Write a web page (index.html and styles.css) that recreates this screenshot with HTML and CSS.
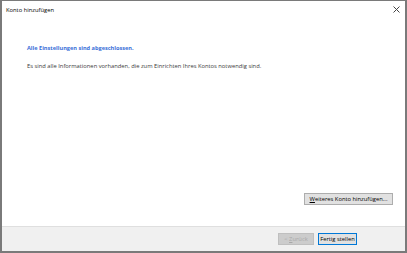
FILE: index.html
```html
<!DOCTYPE html>
<html>
<head>
    <title>Konto hinzufügen</title>
    <link rel="stylesheet" href="styles.css">
</head>
<body>
    <div class="window">
        <div class="titlebar">
            <span class="title">Konto hinzufügen</span>
            <span class="close">
                <svg width="7" height="7" viewBox="0 0 7 7"><path d="M0.5 0.5 L6.5 6.5 M6.5 0.5 L0.5 6.5" stroke="#444" stroke-width="1" fill="none"/></svg>
            </span>
        </div>
        <div class="content">
            <h1 class="heading">Alle Einstellungen sind abgeschlossen.</h1>
            <p class="info">Es sind alle Informationen vorhanden, die zum Einrichten Ihres Kontos notwendig sind.</p>
            <div class="spacer"></div>
            <div class="extra">
                <button class="btn wide"><u>W</u>eiteres Konto hinzufügen...</button>
            </div>
        </div>
        <div class="footer">
            <button class="btn disabled">&lt; <u>Z</u>urück</button>
            <button class="btn primary">Fertig stellen</button>
        </div>
    </div>
</body>
</html>
```

FILE: styles.css
```css
html, body {
    margin: 0;
    padding: 0;
    height: 100%;
}
body {
    font-family: "Open Sans", "Noto Sans", sans-serif;
    font-size: 5.8px;
    color: #222;
    background: #fff;
}
.window {
    box-sizing: border-box;
    width: 407px;
    height: 253px;
    border: 1px solid #7a7a7a;
    border-left-width: 2px;
    border-right-width: 2px;
    border-bottom-width: 2px;
    display: flex;
    flex-direction: column;
    background: #fff;
}
.titlebar {
    height: 17px;
    display: flex;
    align-items: center;
    justify-content: space-between;
    padding: 0 5px 0 4px;
}
.title {
    color: #000;
}
.close {
    display: flex;
}
.content {
    flex: 1;
    display: flex;
    flex-direction: column;
    padding: 26px 12px 0 25px;
}
.heading {
    margin: 0;
    font-size: 5.6px;
    font-weight: bold;
    color: #3a6fd8;
}
.info {
    margin: 10px 0 0 0;
    color: #3a3a3a;
}
.spacer {
    flex: 1;
}
.extra {
    display: flex;
    justify-content: flex-end;
    margin-bottom: 21px;
}
.btn {
    font-family: inherit;
    font-size: 5.8px;
    color: #000;
    background: #e1e1e1;
    border: 1px solid #adadad;
    padding: 0;
    height: 12px;
    margin: 0;
    white-space: nowrap;
    line-height: 10px;
}
.btn.wide {
    width: 89px;
}
.footer {
    height: 24px;
    border-top: 1px solid #dfdfdf;
    background: #f0f0f0;
    display: flex;
    align-items: center;
    justify-content: flex-end;
    padding-right: 48px;
    gap: 4px;
}
.btn.disabled {
    color: #a8a8a8;
    background: #cccccc;
    border-color: #bfbfbf;
    width: 36px;
}
.btn.primary {
    border-color: #0078d7;
    width: 39px;
}
```
